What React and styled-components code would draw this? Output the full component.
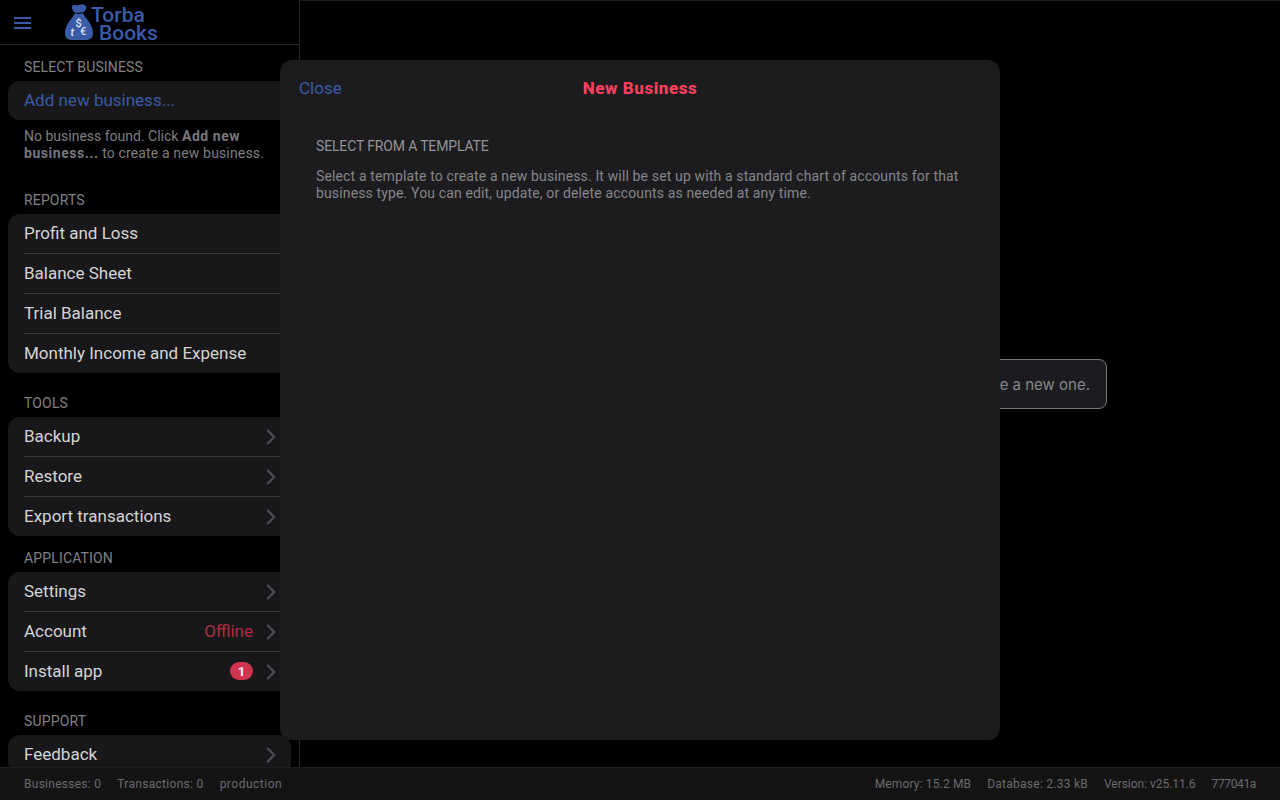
import React from 'react';
import styled, { createGlobalStyle } from 'styled-components';
import { ChevronRight } from 'lucide-react';

const GlobalStyle = createGlobalStyle`
  html, body {
    margin: 0;
    height: 100%;
    background: #000;
    font-family: Roboto, "Liberation Sans", sans-serif;
    overflow: hidden;
  }
`;

const Page = styled.div`
  display: flex;
  flex-direction: column;
  width: 1280px;
  height: 800px;
  background: #000;
`;

const Body = styled.div`
  display: flex;
  flex: 1;
  min-height: 0;
`;

const Sidebar = styled.aside`
  width: 300px;
  box-sizing: border-box;
  border-right: 1px solid #262628;
  overflow: hidden;
  flex-shrink: 0;
`;

const Header = styled.header`
  display: flex;
  align-items: center;
  height: 45px;
  box-sizing: border-box;
  padding-left: 13px;
  border-bottom: 1px solid #262628;
`;

const MenuButton = styled.button`
  display: flex;
  width: 20px;
  height: 20px;
  padding: 0;
  border: none;
  background: none;
  color: #3a5ba8;
`;

const Logo = styled.div`
  display: flex;
  align-items: center;
  margin-left: 31px;
  color: #3a5ba8;
`;

const LogoText = styled.div`
  margin-left: -3px;
  margin-top: 3px;
  font-size: 21px;
  font-weight: 500;
  line-height: 18px;
`;

const LogoLine = styled.div`
  padding-left: ${p => p.$indent || 0}px;
`;

const Nav = styled.nav`
  padding: 0 8px;
`;

const SectionLabel = styled.div`
  margin-top: ${p => p.$top}px;
  padding-left: 16px;
  height: 36px;
  line-height: 44px;
  box-sizing: border-box;
  font-size: 14px;
  color: #808084;
  letter-spacing: 0.15px;
  text-transform: uppercase;
`;

const Group = styled.div`
  background: #18181a;
  border-radius: 12px;
`;

const Row = styled.div`
  display: flex;
  align-items: center;
  height: ${p => (p.$first ? 39 : 40)}px;
  box-sizing: border-box;
  margin-left: 16px;
  padding: 0 7px 1px 0;
  border-top: ${p => (p.$first ? 'none' : '1px solid #3a3a3c')};
  font-size: 17px;
  color: ${p => (p.$link ? '#3a5ba8' : '#d4d4d6')};
`;

const RowLabel = styled.span`
  flex: 1;
`;

const RowValue = styled.span`
  color: #ad2c42;
  margin-right: 5px;
`;

const Badge = styled.span`
  display: flex;
  align-items: center;
  justify-content: center;
  width: 23px;
  height: 18px;
  margin-right: 5px;
  border-radius: 9px;
  background: #d1344f;
  color: #f4f4f5;
  font-size: 13px;
  font-weight: 700;
`;

const Chevron = styled(ChevronRight)`
  width: 26px;
  height: 26px;
  margin-top: 2px;
  color: #4c4c50;
  stroke-width: 2.25;
`;

const Note = styled.p`
  margin: 8px 0 0;
  padding: 0 16px;
  font-size: 14px;
  line-height: 17px;
  color: #7e7e82;

  strong {
    font-weight: 700;
    letter-spacing: 0.55px;
    color: #77777b;
  }
`;

const NoteTail = styled.span`
  letter-spacing: 0.15px;
`;

const Main = styled.main`
  flex: 1;
  display: flex;
  align-items: center;
  justify-content: center;
  border-top: 1px solid #1c1c1e;
`;

const Toast = styled.div`
  box-sizing: border-box;
  width: 634px;
  height: 50px;
  padding: 0 16px;
  display: flex;
  align-items: center;
  justify-content: flex-end;
  background: #1c1c20;
  border: 1px solid #77777b;
  border-radius: 8px;
  font-family: Inter, sans-serif;
  font-size: 15px;
  color: #88888c;
`;

const Footer = styled.footer`
  display: flex;
  align-items: center;
  gap: 16px;
  height: 33px;
  box-sizing: border-box;
  padding: 0 24px;
  background: #141415;
  border-top: 1px solid #1f1f21;
  font-size: 12px;
  color: #6a6a6f;
`;

const FooterItem = styled.span`
  letter-spacing: ${p => p.$spacing}px;
`;

const FooterSpacer = styled.div`
  flex: 1;
`;

const Modal = styled.div`
  position: fixed;
  top: 60px;
  left: 280px;
  width: 720px;
  height: 680px;
  background: #1c1c1e;
  border-radius: 12px;
`;

const ModalHeader = styled.div`
  position: relative;
  display: flex;
  align-items: center;
  justify-content: center;
  height: 56px;
`;

const CloseLink = styled.a`
  position: absolute;
  left: 19px;
  font-size: 17px;
  color: #3a5ba8;
`;

const ModalTitle = styled.h2`
  margin: 0;
  font-size: 17px;
  font-weight: 800;
  letter-spacing: 0.55px;
  color: #ff405f;
`;

const ModalBody = styled.div`
  padding: 22px 36px;
`;

const ModalLabel = styled.div`
  font-size: 14px;
  line-height: 17px;
  letter-spacing: -0.15px;
  color: #939398;
  text-transform: uppercase;
`;

const ModalText = styled.p`
  margin: 13px 0 0;
  font-size: 14px;
  line-height: 17px;
  letter-spacing: 0.14px;
  color: #86868b;
`;

const MoneyBag = () => (
  <svg width="30" height="38" viewBox="0 0 30 38">
    <path fill="#3a5ba8" d="M8 3 C10 1 13 3 15 2 C17 1 20 1 22 3 C23 5 21 8 20 9 C17 10 12 10 10 9 C9 7 7 5 8 3 Z" />
    <path fill="#3a5ba8" d="M11 10 C13 11 17 11 19 10 C21 15 29 21 29 30 C29 35 26 37 22 37 H8 C4 37 1 35 1 30 C1 21 9 15 11 10 Z" />
    <g fill="#dfe4f0" fontFamily="Roboto, sans-serif" fontWeight="500">
      <text x="11.5" y="23.5" fontSize="11">$</text>
      <text x="6.5" y="33" fontSize="11" fontStyle="italic">t</text>
      <text x="16" y="32" fontSize="11">€</text>
    </g>
  </svg>
);

const Hamburger = () => (
  <svg width="20" height="20" viewBox="0 0 20 20" stroke="currentColor" strokeWidth="2">
    <path d="M1 6 H18 M1 11 H18 M1 16 H18" />
  </svg>
);

const sections = [
  { label: 'Reports', top: 16, rows: [
    { label: 'Profit and Loss' },
    { label: 'Balance Sheet' },
    { label: 'Trial Balance' },
    { label: 'Monthly Income and Expense' },
  ] },
  { label: 'Tools', top: 8, rows: [
    { label: 'Backup', chevron: true },
    { label: 'Restore', chevron: true },
    { label: 'Export transactions', chevron: true },
  ] },
  { label: 'Application', top: 0, rows: [
    { label: 'Settings', chevron: true },
    { label: 'Account', value: 'Offline', chevron: true },
    { label: 'Install app', badge: 1, chevron: true },
  ] },
  { label: 'Support', top: 8, rows: [
    { label: 'Feedback', chevron: true },
  ] },
];

export default function App() {
  return (
    <Page>
      <GlobalStyle />
      <Body>
        <Sidebar>
          <Header>
            <MenuButton><Hamburger /></MenuButton>
            <Logo>
              <MoneyBag />
              <LogoText>
                <LogoLine>Torba</LogoLine>
                <LogoLine $indent={8}>Books</LogoLine>
              </LogoText>
            </Logo>
          </Header>
          <Nav>
            <SectionLabel $top={0}>Select Business</SectionLabel>
            <Group>
              <Row $first $link><RowLabel>Add new business...</RowLabel></Row>
            </Group>
            <Note>
              No business found. Click <strong>Add new business...</strong> <NoteTail>to create a new business.</NoteTail>
            </Note>
            {sections.map(section => (
              <React.Fragment key={section.label}>
                <SectionLabel $top={section.top}>{section.label}</SectionLabel>
                <Group>
                  {section.rows.map((row, i) => (
                    <Row key={row.label} $first={i === 0}>
                      <RowLabel>{row.label}</RowLabel>
                      {row.value && <RowValue>{row.value}</RowValue>}
                      {row.badge && <Badge>{row.badge}</Badge>}
                      {row.chevron && <Chevron />}
                    </Row>
                  ))}
                </Group>
              </React.Fragment>
            ))}
          </Nav>
        </Sidebar>
        <Main>
          <Toast>Select a business from the sidebar to get started, or create a new one.</Toast>
        </Main>
      </Body>
      <Footer>
        <FooterItem $spacing={0.27}>Businesses: 0</FooterItem>
        <FooterItem $spacing={0.3}>Transactions: 0</FooterItem>
        <FooterItem $spacing={0.5}>production</FooterItem>
        <FooterSpacer />
        <FooterItem $spacing={0.15}>Memory: 15.2 MB</FooterItem>
        <FooterItem $spacing={0.25}>Database: 2.33 kB</FooterItem>
        <FooterItem $spacing={-0.03}>Version: v25.11.6</FooterItem>
        <FooterItem $spacing={-0.37}>777041a</FooterItem>
      </Footer>
      <Modal>
        <ModalHeader>
          <CloseLink>Close</CloseLink>
          <ModalTitle>New Business</ModalTitle>
        </ModalHeader>
        <ModalBody>
          <ModalLabel>Select from a template</ModalLabel>
          <ModalText>
            Select a template to create a new business. It will be set up with a standard chart of accounts for that
            business type. You can edit, update, or delete accounts as needed at any time.
          </ModalText>
        </ModalBody>
      </Modal>
    </Page>
  );
}
